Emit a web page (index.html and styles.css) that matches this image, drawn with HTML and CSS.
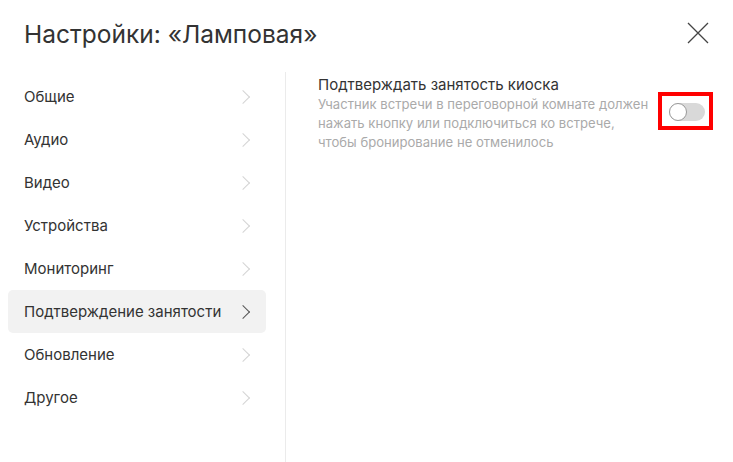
FILE: index.html
```html
<!DOCTYPE html>
<html lang="ru">
<head>
  <meta charset="UTF-8">
  <title>Настройки</title>
  <link rel="stylesheet" href="styles.css">
</head>
<body>

<div class="dialog">
  <div class="header">
    <h1>Настройки: «Ламповая»</h1>
    <button class="close" aria-label="Закрыть">
      <svg width="22" height="22" viewBox="0 0 22 22"><path d="M1 1L21 21M21 1L1 21" stroke="#444" stroke-width="1.3" fill="none"/></svg>
    </button>
  </div>

  <div class="body">
    <ul class="menu">
      <li>Общие<span class="chev"></span></li>
      <li>Аудио<span class="chev"></span></li>
      <li>Видео<span class="chev"></span></li>
      <li>Устройства<span class="chev"></span></li>
      <li>Мониторинг<span class="chev"></span></li>
      <li class="active">Подтверждение занятости<span class="chev"></span></li>
      <li>Обновление<span class="chev"></span></li>
      <li>Другое<span class="chev"></span></li>
    </ul>

    <div class="panel">
      <div class="option">
        <div class="option-text">
          <div class="option-title">Подтверждать занятость киоска</div>
          <div class="option-desc">Участник встречи в переговорной комнате должен нажать кнопку или подключиться ко встрече, чтобы бронирование не отменилось</div>
        </div>
        <div class="highlight">
          <span class="toggle"><span class="knob"></span></span>
        </div>
      </div>
    </div>
  </div>
</div>

</body>
</html>
```

FILE: styles.css
```css
* {
  box-sizing: border-box;
}

body {
  margin: 0;
  background: #fff;
  font-family: 'Inter', 'Liberation Sans', sans-serif;
  color: #333;
}

.dialog {
  width: 733px;
  height: 462px;
  overflow: hidden;
}

.header {
  display: flex;
  justify-content: space-between;
  align-items: flex-start;
  padding: 20px 24px 0 24px;
  height: 72px;
}

h1 {
  margin: 0;
  font-size: 24.5px;
  font-weight: normal;
  line-height: 28px;
  color: #333;
}

.close {
  background: none;
  border: none;
  padding: 0;
  margin-top: 2px;
  cursor: pointer;
  width: 22px;
  height: 22px;
}

.body {
  display: flex;
  height: 390px;
}

.menu {
  list-style: none;
  margin: 0;
  padding: 3px 19px 0 8px;
  width: 286px;
  border-right: 1px solid #ebebeb;
}

.menu li {
  display: flex;
  justify-content: space-between;
  align-items: center;
  height: 43px;
  padding: 0 16px 0 16px;
  border-radius: 5px;
  font-size: 15px;
  color: #333;
}

.menu li.active {
  background: #f2f2f2;
}

.chev {
  width: 10px;
  height: 10px;
  border-top: 1px solid #d4d4d4;
  border-right: 1px solid #d4d4d4;
  transform: rotate(45deg);
  margin-right: 2px;
}

.menu li.active .chev {
  border-color: #555;
}

.panel {
  flex: 1;
  padding: 3px 20px 0 32px;
}

.option {
  display: flex;
  justify-content: space-between;
  align-items: flex-start;
}

.option-title {
  font-size: 15px;
  line-height: 20px;
  color: #333;
}

.option-desc {
  width: 332px;
  font-size: 13.1px;
  line-height: 19px;
  color: #aaa;
}

.highlight {
  flex: none;
  margin-top: 17px;
  border: 4px solid #f00;
  padding: 7px 6px;
  width: 55px;
  height: 38px;
}

.toggle {
  display: block;
  width: 36px;
  height: 18px;
  border-radius: 9px;
  background: #d9d9d9;
  position: relative;
  margin-left: 1px;
}

.knob {
  position: absolute;
  left: 0;
  top: 0;
  width: 18px;
  height: 18px;
  border-radius: 50%;
  background: #fff;
  border: 1px solid #999;
}
```
